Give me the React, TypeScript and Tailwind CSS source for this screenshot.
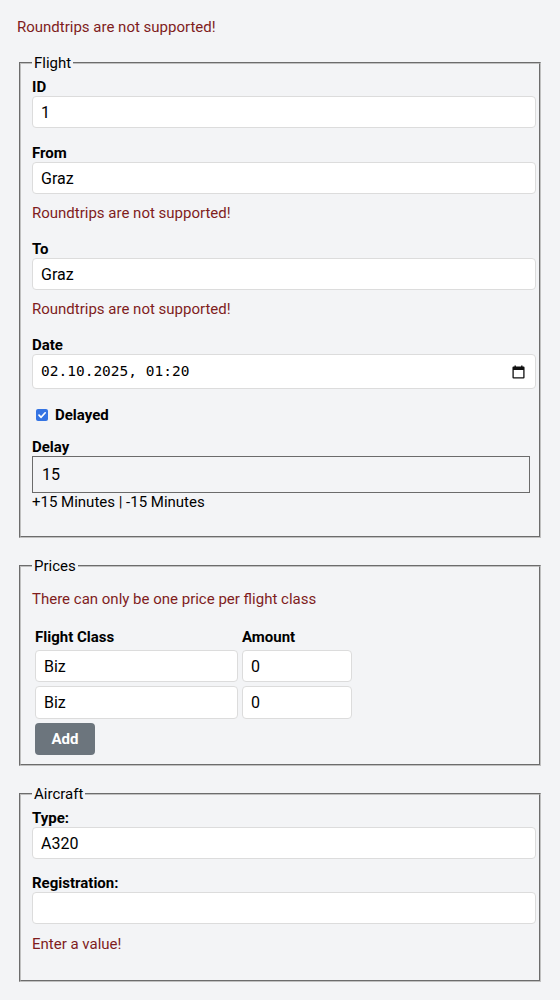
import React from 'react';

const font = { fontFamily: 'Roboto, "Liberation Sans", sans-serif' };

const inputClass =
  'block h-[32px] w-[calc(100%+9px)] rounded-[4px] border border-[#dcdcdc] bg-white px-2 text-[16px] text-black outline-none';

function Field({ label, value, className = '', error }: { label: string; value: string; className?: string; error?: string }) {
  return (
    <div className={className}>
      <label className="block font-bold leading-[18px]">{label}</label>
      <input type="text" defaultValue={value} className={inputClass} />
      {error && <div className="mt-[10px] leading-[18px] text-[#7f1d1d]">{error}</div>}
    </div>
  );
}

function Legend({ children }: { children: React.ReactNode }) {
  return <legend className="px-[2px] leading-[18px]">{children}</legend>;
}

const fieldsetClass =
  'mx-[2px] border-2 border-[#c0c0c0] [border-style:groove] pl-[11px] pr-[12px] pt-[6px]';

const cellInput =
  'w-full rounded-[4px] border border-[#dcdcdc] bg-white px-2 text-[16px] text-black outline-none';

export default function App() {
  return (
    <div style={font} className="min-h-screen bg-[#f3f4f6] px-[17px] pt-[18px] pb-[20px] text-[15px] text-black">
      <div className="mb-[18px] leading-[18px] text-[#7f1d1d]">Roundtrips are not supported!</div>

      {/* Flight */}
      <fieldset className={`${fieldsetClass} pb-[25px]`}>
        <Legend>Flight</Legend>
        <Field label="ID" value="1" className="mb-[16px]" />
        <Field label="From" value="Graz" className="mb-[18px]" error="Roundtrips are not supported!" />
        <Field label="To" value="Graz" className="mb-[18px]" error="Roundtrips are not supported!" />

        <div>
          <label className="block font-bold leading-[18px]">Date</label>
          <div className="flex h-[35px] w-[calc(100%+9px)] items-center justify-between rounded-[4px] border border-[#dcdcdc] bg-white pl-[8px] pr-[10px]">
            <span className="text-[14.5px] text-black" style={{ fontFamily: '"DejaVu Sans Mono", "Liberation Mono", monospace' }}>
              02.10.2025, 01:20
            </span>
            <svg width="13" height="14" viewBox="0 0 13 14" fill="none">
              <rect x="1.1" y="2.1" width="10.8" height="10.8" stroke="#111" strokeWidth="1.3" rx="0.5" />
              <rect x="1" y="2" width="11" height="3" fill="#111" />
              <rect x="2.5" y="0.5" width="1.4" height="2" fill="#111" />
              <rect x="9.1" y="0.5" width="1.4" height="2" fill="#111" />
            </svg>
          </div>
        </div>

        <div className="mt-[17px] flex h-[18px] items-center">
          <span className="ml-[4px] flex h-[12px] w-[12px] items-center justify-center rounded-[2px] bg-[#3574e3]">
            <svg width="10" height="10" viewBox="0 0 10 10" fill="none">
              <path d="M2 5.2 L4.1 7.3 L8.2 2.8" stroke="white" strokeWidth="1.7" strokeLinecap="round" strokeLinejoin="round" />
            </svg>
          </span>
          <span className="ml-[7px] font-bold leading-[18px]">Delayed</span>
        </div>

        <div className="mt-[14px]">
          <label className="block font-bold leading-[18px]">Delay</label>
          <input
            type="text"
            defaultValue="15"
            className="block h-[37px] w-[calc(100%+3px)] border border-[#6b6b6b] bg-transparent px-[9px] text-[16px] text-black outline-none"
          />
          <div className="leading-[18px]">+15 Minutes | -15 Minutes</div>
        </div>
      </fieldset>

      {/* Prices */}
      <fieldset className={`${fieldsetClass} mt-[19px] pb-[9px]`}>
        <Legend>Prices</Legend>
        <div className="mt-[9px] leading-[18px] text-[#7f1d1d]">There can only be one price per flight class</div>
        <div className="ml-[3px] mt-[20px] grid grid-cols-[203px_110px] gap-x-[4px] gap-y-[4px]">
          <div className="font-bold leading-[18px]">Flight Class</div>
          <div className="font-bold leading-[18px]">Amount</div>
          <input type="text" defaultValue="Biz" className={`h-[32px] ${cellInput}`} />
          <input type="text" defaultValue="0" className={`h-[32px] ${cellInput}`} />
          <input type="text" defaultValue="Biz" className={`h-[33px] ${cellInput}`} />
          <input type="text" defaultValue="0" className={`h-[33px] ${cellInput}`} />
          <div>
            <button className="h-[32px] w-[60px] rounded-[4px] bg-[#6c757d] text-[15px] font-bold text-white">Add</button>
          </div>
        </div>
      </fieldset>

      {/* Aircraft */}
      <fieldset className={`${fieldsetClass} mt-[19px] pb-[27px]`}>
        <Legend>Aircraft</Legend>
        <Field label="Type:" value="A320" className="mb-[15px]" />
        <div>
          <label className="block font-bold leading-[18px]">Registration:</label>
          <input type="text" defaultValue="" className={inputClass} />
          <div className="mt-[11px] leading-[18px] text-[#7f1d1d]">Enter a value!</div>
        </div>
      </fieldset>
    </div>
  );
}
